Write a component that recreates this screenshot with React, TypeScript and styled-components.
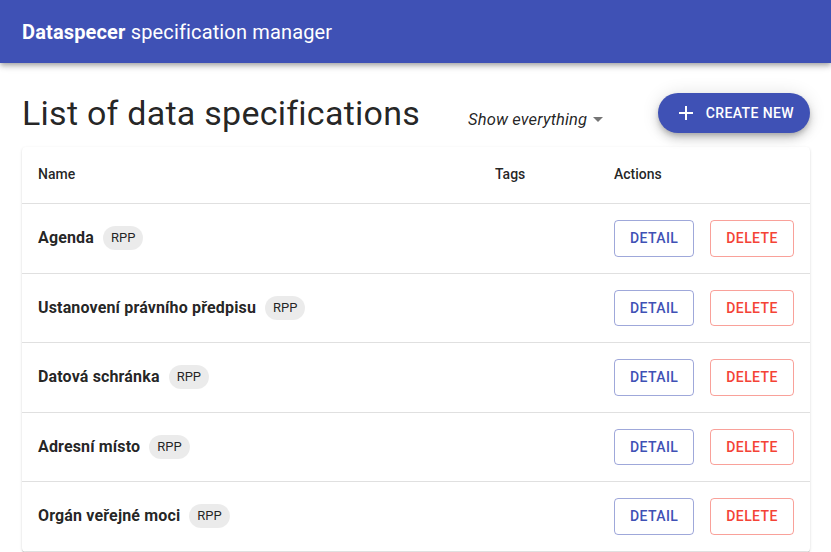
import React from "react";
import styled, { createGlobalStyle } from "styled-components";

const GlobalStyle = createGlobalStyle`
  html, body {
    margin: 0;
    padding: 0;
    overflow: hidden;
    background: #fff;
    font-family: Roboto, "Liberation Sans", Arial, sans-serif;
    color: rgba(0, 0, 0, 0.87);
  }
  * { box-sizing: border-box; }
`;

const AppBar = styled.header`
  height: 63px;
  display: flex;
  align-items: center;
  padding: 0 22px;
  background: #3f51b5;
  color: #fff;
  box-shadow: 0px 2px 4px -1px rgba(0, 0, 0, 0.2), 0px 4px 5px 0px rgba(0, 0, 0, 0.14),
    0px 1px 10px 0px rgba(0, 0, 0, 0.12);
  position: relative;
  z-index: 2;
`;

const AppTitle = styled.h6`
  margin: 0;
  font-size: 20px;
  font-weight: 400;
  line-height: 1.6;
  letter-spacing: 0.0075em;
  strong { font-weight: 700; }
`;

const Main = styled.main`
  padding: 29px 21px 0 22px;
`;

const HeaderRow = styled.div`
  display: flex;
  align-items: center;
  height: 42px;
`;

const TitleGroup = styled.div`
  display: flex;
  align-items: baseline;
`;

const Heading = styled.h4`
  margin: 0;
  font-size: 34px;
  font-weight: 400;
  line-height: 42px;
  letter-spacing: 0.00735em;
`;

const Filter = styled.button`
  margin-left: 48px;
  display: inline-flex;
  align-items: center;
  gap: 6px;
  border: none;
  background: none;
  padding: 0;
  font-family: inherit;
  font-size: 16.5px;
  letter-spacing: 0.15px;
  font-style: italic;
  color: rgba(0, 0, 0, 0.87);
  cursor: pointer;
  line-height: 1.4375em;
`;

const Caret = styled.span`
  width: 0;
  height: 0;
  border-left: 5px solid transparent;
  border-right: 5px solid transparent;
  border-top: 5px solid rgba(0, 0, 0, 0.54);
`;

const Fab = styled.button`
  margin-left: auto;
  height: 40px;
  border-radius: 20px;
  border: none;
  padding: 0 16px;
  display: inline-flex;
  align-items: center;
  gap: 8px;
  background: #3f51b5;
  color: #fff;
  font-family: inherit;
  font-size: 14px;
  font-weight: 500;
  letter-spacing: 0.02857em;
  text-transform: uppercase;
  box-shadow: 0px 3px 5px -1px rgba(0, 0, 0, 0.2), 0px 6px 10px 0px rgba(0, 0, 0, 0.14),
    0px 1px 18px 0px rgba(0, 0, 0, 0.12);
  cursor: pointer;
`;

const Card = styled.div`
  margin-top: 13px;
  background: #fff;
  border-radius: 4px;
  box-shadow: 0px 2px 1px -1px rgba(0, 0, 0, 0.2), 0px 1px 1px 0px rgba(0, 0, 0, 0.14),
    0px 1px 3px 0px rgba(0, 0, 0, 0.12);
  overflow: hidden;
`;

const Table = styled.table`
  width: 100%;
  border-collapse: collapse;
  table-layout: fixed;
`;

const Th = styled.th<{ $w?: number }>`
  ${(p) => (p.$w ? `width: ${p.$w}px;` : "")}
  text-align: left;
  font-size: 14px;
  font-weight: 500;
  line-height: 24px;
  padding: 15px 16px 17px;
  border-bottom: 1px solid rgba(224, 224, 224, 1);
  color: rgba(0, 0, 0, 0.87);
`;

const Td = styled.td`
  padding: 16px;
  font-size: 14px;
  line-height: 20px;
  border-bottom: 1px solid rgba(224, 224, 224, 1);
  vertical-align: middle;
`;

const NameText = styled.span`
  font-size: 16px;
  font-weight: 700;
  letter-spacing: 0.00938em;
  vertical-align: middle;
`;

const Chip = styled.span`
  display: inline-flex;
  align-items: center;
  height: 24px;
  padding: 0 8px;
  margin-left: 9px;
  border-radius: 12px;
  background: rgba(0, 0, 0, 0.08);
  font-size: 13px;
  color: rgba(0, 0, 0, 0.87);
  vertical-align: middle;
`;

const Actions = styled.div`
  display: flex;
  gap: 16px;
`;

const OutlinedButton = styled.button<{ $tone: "primary" | "error" }>`
  height: 36.5px;
  padding: 5px 15px;
  border-radius: 4px;
  background: transparent;
  font-family: inherit;
  font-size: 14px;
  font-weight: 500;
  letter-spacing: 0.02857em;
  line-height: 1.75;
  text-transform: uppercase;
  cursor: pointer;
  color: ${(p) => (p.$tone === "primary" ? "#3f51b5" : "#f44336")};
  border: 1px solid
    ${(p) => (p.$tone === "primary" ? "rgba(63, 81, 181, 0.5)" : "rgba(244, 67, 54, 0.5)")};
`;

const PlusIcon = () => (
  <svg width="24" height="24" viewBox="0 0 24 24" fill="currentColor" aria-hidden>
    <path d="M19 13h-6v6h-2v-6H5v-2h6V5h2v6h6v2z" />
  </svg>
);

const specs = [
  { name: "Agenda", tags: ["RPP"] },
  { name: "Ustanovení právního předpisu", tags: ["RPP"] },
  { name: "Datová schránka", tags: ["RPP"] },
  { name: "Adresní místo", tags: ["RPP"] },
  { name: "Orgán veřejné moci", tags: ["RPP"] },
];

export default function App() {
  return (
    <>
      <GlobalStyle />
      <AppBar>
        <AppTitle>
          <strong>Dataspecer</strong> specification manager
        </AppTitle>
      </AppBar>
      <Main>
        <HeaderRow>
          <TitleGroup>
            <Heading>List of data specifications</Heading>
            <Filter>
              Show everything
              <Caret />
            </Filter>
          </TitleGroup>
          <Fab>
            <PlusIcon />
            Create new
          </Fab>
        </HeaderRow>
        <Card>
          <Table>
            <thead>
              <tr>
                <Th>Name</Th>
                <Th $w={119}>Tags</Th>
                <Th $w={212}>Actions</Th>
              </tr>
            </thead>
            <tbody>
              {specs.map((s) => (
                <tr key={s.name}>
                  <Td>
                    <NameText>{s.name}</NameText>
                    {s.tags.map((t) => (
                      <Chip key={t}>{t}</Chip>
                    ))}
                  </Td>
                  <Td />
                  <Td>
                    <Actions>
                      <OutlinedButton $tone="primary">Detail</OutlinedButton>
                      <OutlinedButton $tone="error">Delete</OutlinedButton>
                    </Actions>
                  </Td>
                </tr>
              ))}
            </tbody>
          </Table>
        </Card>
      </Main>
    </>
  );
}
